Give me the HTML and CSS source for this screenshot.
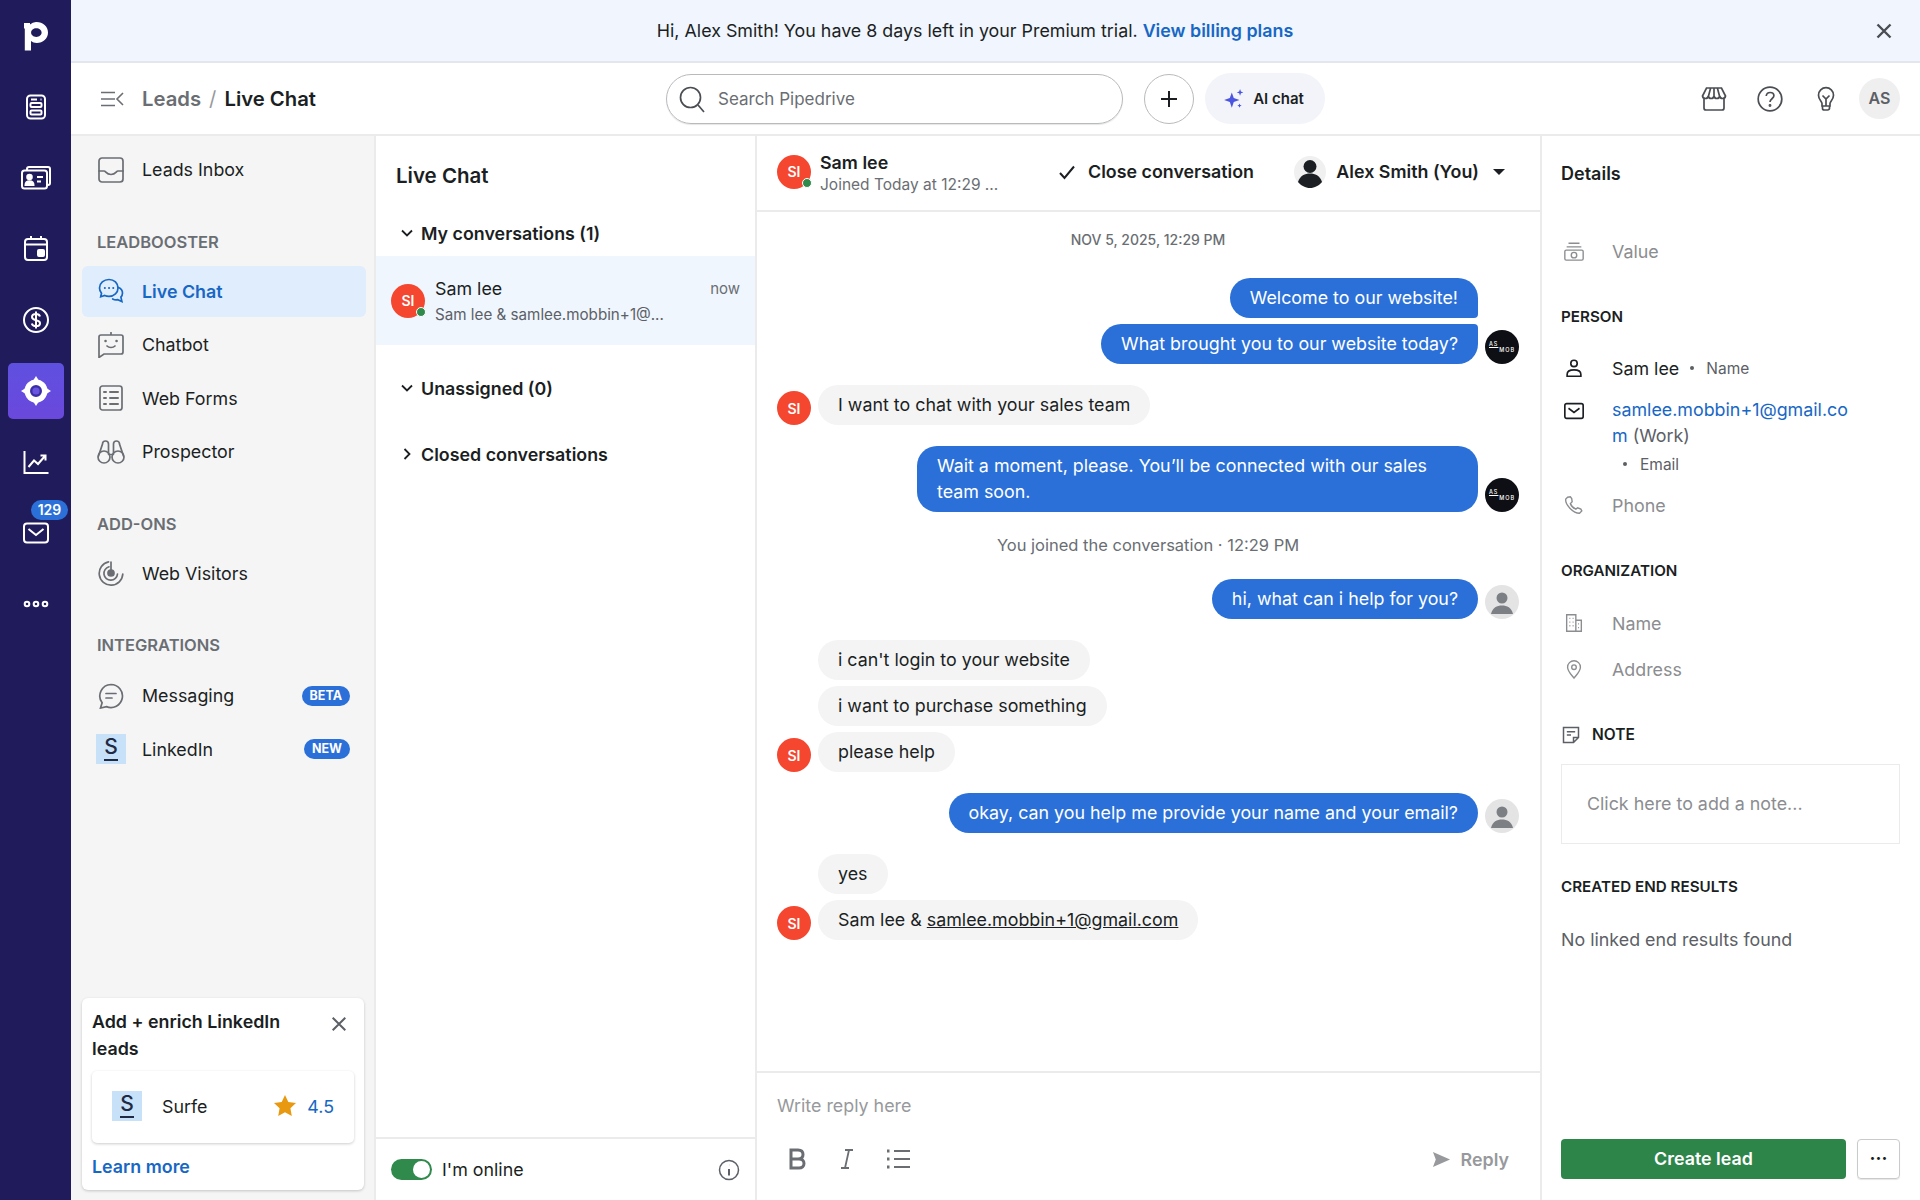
FILE: index.html
```html
<!DOCTYPE html>
<html lang="en">
<head>
    <meta charset="UTF-8">
    <meta name="viewport" content="width=device-width, initial-scale=1.0">
    <title>Live Chat</title>
    <link rel="stylesheet" href="styles.css">
</head>
<body>
    <nav class="rail">
        <div class="rail-item">
            <svg class="logo" viewBox="0 0 26 30"><path d="M1 2h6v1.500A8.600 8.600 0 0 1 13.500 1C19.900 1 25 5.600 25 11.500S19.900 22 13.800 22c-2.400 0-4.300-.7-5.800-1.900V29.500H1.800V7.500H1Zm12.300 5.200c-3 0-5.200 1.900-5.200 4.300s2.200 4.400 5.200 4.400 5.300-2 5.300-4.400-2.300-4.300-5.300-4.300Z" fill="#fff"/></svg>
        </div>
        <div class="rail-item">
            <svg class="rail-icon" viewBox="0 0 28 28"><rect x="5" y="2.500" width="18" height="23" rx="3.500"/><rect x="8.500" y="10" width="11" height="4" rx="1"/><rect x="8.500" y="17.500" width="11" height="4" rx="1"/><path d="M9 6.500h6M18.500 6.500h1"/></svg>
        </div>
        <div class="rail-item">
            <svg class="rail-icon wide" viewBox="0 0 32 28"><path d="M7 6V5a2 2 0 0 1 2-2h19a2 2 0 0 1 2 2v14a2 2 0 0 1-2 2h-1"/><rect x="2" y="6.500" width="25" height="18" rx="2.500"/><circle cx="9.500" cy="13" r="2.300" fill="#fff"/><path d="M5.500 21c0-5 8-5 8 0Z" fill="#fff"/><path d="M17 13h6M17 17.500h4"/></svg>
        </div>
        <div class="rail-item">
            <svg class="rail-icon" viewBox="0 1 28 28"><rect x="3" y="5" width="22" height="21" rx="3"/><path d="M9 2v4M19 2v4M3 10.500h22"/><rect x="16" y="16" width="6" height="6" rx="1" fill="#fff"/></svg>
        </div>
        <div class="rail-item">
            <svg class="rail-icon" viewBox="0 0 28 28"><circle cx="14" cy="14" r="12"/><path d="M18 10.500c-.5-1.700-2-2.500-4-2.500-2.300 0-4 1.100-4 3 0 4.500 8 2 8 6.200 0 2-1.800 2.900-4 2.900s-3.700-.9-4.200-2.700M14 5.500v17"/></svg>
        </div>
        <div class="rail-item">
            <div class="rail-active">
                <svg class="target" viewBox="0 0 32 32"><circle cx="16" cy="16" r="11.500" fill="#fff"/><path d="M16 1l2.500 4h-5ZM16 31l-2.500-4h5ZM1 16l4-2.500v5ZM31 16l-4 2.500v-5Z" fill="#fff"/><circle cx="16" cy="16" r="4.800" fill="#6a55e0" stroke="#3b2fa6" stroke-width="2.400"/></svg>
            </div>
        </div>
        <div class="rail-item">
            <svg class="rail-icon" viewBox="0 0 28 28"><path d="M2.500 3v22h24M6.500 19l5.500-6.500 4 3.500 7-8M18.500 7.500h5v5"/></svg>
        </div>
        <div class="rail-item">
            <span class="rail-badge">129</span>
            <svg class="rail-icon" viewBox="0 0 28 28"><rect x="2" y="4.500" width="24" height="19" rx="3"/><path d="M6.500 10l7.500 6 7.500-6"/></svg>
        </div>
        <div class="rail-item">
            <svg class="rail-icon" viewBox="0 0 28 28"><circle cx="5" cy="14" r="2.300"/><circle cx="14" cy="14" r="2.300"/><circle cx="23" cy="14" r="2.300"/></svg>
        </div>
    </nav>

    <div class="main">
        <div class="banner">
            <p class="banner-text">Hi, Alex Smith! You have 8 days left in your Premium trial. <a class="banner-link">View billing plans</a></p>
            <svg class="banner-close line-icon" viewBox="0 0 20 20"><path d="M3.500 3.500l13 13M16.500 3.500l-13 13"/></svg>
        </div>

        <header class="topbar">
            <div class="crumbs">
                <svg class="menu-icon line-icon" viewBox="0 0 24 18"><path d="M1 2.500h14M1 9h14M1 15.500h14M23 3l-6 6 6 6"/></svg>
                <span class="crumb-muted">Leads</span>
                <span class="crumb-slash">/</span>
                <span class="crumb-current">Live Chat</span>
            </div>
            <div class="search">
                <svg class="search-icon line-icon" viewBox="0 0 28 28"><circle cx="12.500" cy="12.500" r="10"/><path d="M20 20l6 7"/></svg>
                <span>Search Pipedrive</span>
            </div>
            <div class="add-btn">
                <svg class="line-icon" viewBox="0 0 20 20"><path d="M10 2v16M2 10h16"/></svg>
            </div>
            <div class="ai-btn">
                <svg viewBox="0 0 20 20"><path d="M8 4l1.800 5.200L15 11l-5.200 1.800L8 18l-1.800-5.200L1 11l5.200-1.800ZM15.500 1l.8 2.200 2.200.8-2.200.8-.8 2.200-.8-2.200-2.200-.8 2.200-.8ZM15 14l.6 1.400 1.400.6-1.400.6-.6 1.400-.6-1.400L13 16l1.400-.6Z" fill="#4a55e0"/></svg>
                <span>AI chat</span>
            </div>
            <div class="top-icons">
                <svg class="line-icon" viewBox="0 0 26 26"><path d="M3 12v10a2 2 0 0 0 2 2h16a2 2 0 0 0 2-2V12M5.500 2h15l4 8a3 3 0 0 1-3 2.500c-1.500 0-2.500-1-2.800-2.500-.3 1.500-1.300 2.500-2.800 2.500S13.300 11.500 13 10c-.3 1.500-1.400 2.500-2.900 2.500S7.600 11.500 7.300 10C7 11.500 6 12.500 4.500 12.500a3 3 0 0 1-3-2.500ZM9.500 2.500l-2 7.500M16.500 2.500l2 7.500M13 2.500V10"/></svg>
                <svg class="line-icon" viewBox="0 0 26 26"><circle cx="13" cy="13" r="11.800"/><path d="M9.200 10c.3-2.300 1.900-3.500 3.900-3.500 2.200 0 3.800 1.400 3.800 3.300 0 3-3.900 3-3.900 6.200"/><circle cx="13" cy="19.500" r=".6"/></svg>
                <svg class="line-icon" viewBox="0 0 26 26"><path d="M9 20v-2.500c0-2-3.500-3.800-3.500-8.300a7.500 7.500 0 0 1 15 0c0 4.500-3.500 6.300-3.500 8.300V20ZM9.500 20v2.200a1.800 1.800 0 0 0 1.800 1.800h3.400a1.800 1.800 0 0 0 1.800-1.800V20M13 20v-7M9.500 9.500l3.500 3.500 3.500-3.500"/></svg>
                <div class="user-chip">AS</div>
            </div>
        </header>

        <div class="content">
            <aside class="sidebar">
                <div class="nav-row first">
                    <svg class="nav-icon" viewBox="0 0 26 26"><rect x="1" y="1" width="24" height="24" rx="3"/><path d="M1 14h5c2 0 2 3.500 7 3.500S18 14 20 14h5"/></svg>
                    <span>Leads Inbox</span>
                </div>
                <h4 class="nav-heading">LEADBOOSTER</h4>
                <div class="nav-row active">
                    <svg class="nav-icon" viewBox="0 0 26 26"><path d="M11 1.500C5.800 1.500 1.500 5.200 1.500 10c0 2 .8 3.800 2 5.200l-.8 3.600 4-1.300c1.300.6 2.800.9 4.300.9 5.200 0 9-3.700 9-8.400S16.200 1.500 11 1.500Z"/><path d="M20.500 9.500c2.600 1.100 4 3.100 4 5.500 0 1.600-.6 3-1.600 4.100l1 4.400-4.200-1.800c-1.700.4-3.500.1-5-.8"/><path d="M6.800 10h.1M11 10h.1M15.200 10h.1" stroke-width="2"/></svg>
                    <span>Live Chat</span>
                </div>
                <div class="nav-row">
                    <svg class="nav-icon" viewBox="0 0 26 26"><path d="M13 3V.5M3 3h20a2 2 0 0 1 2 2v15a2 2 0 0 1-2 2H6l-5 3.500V5a2 2 0 0 1 2-2Z"/><path d="M7.500 9h.1M18.500 9h.1" stroke-width="2.500"/><path d="M9 14c2 2 6 2 8 0"/></svg>
                    <span>Chatbot</span>
                </div>
                <div class="nav-row">
                    <svg class="nav-icon" viewBox="0 0 26 26"><rect x="2" y="1" width="22" height="24" rx="2.500"/><path d="M6 7h2M12 7h8M6 13h2M12 13h8M6 19h2M12 19h8" stroke-width="2"/></svg>
                    <span>Web Forms</span>
                </div>
                <div class="nav-row">
                    <svg class="nav-icon binoculars" viewBox="0 0 28 26"><circle cx="7" cy="18" r="6"/><circle cx="21" cy="18" r="6"/><path d="M12 15.500h4M1.500 17L5.500 5a3 3 0 0 1 6 0v10M26.500 17L22.500 5a3 3 0 0 0-6 0v10"/></svg>
                    <span>Prospector</span>
                </div>
                <h4 class="nav-heading">ADD-ONS</h4>
                <div class="nav-row">
                    <svg class="nav-icon" viewBox="0 0 26 26"><path d="M10.500 1.800A11.800 11.800 0 1 0 24.800 14"/><path d="M11 6.800a6.800 6.800 0 1 0 8.500 7.200"/><circle cx="13" cy="13" r="3" fill="#6a6e73"/><path d="M13 13L13 2"/></svg>
                    <span>Web Visitors</span>
                </div>
                <h4 class="nav-heading integrations">INTEGRATIONS</h4>
                <div class="nav-row">
                    <svg class="nav-icon" viewBox="0 0 26 26"><path d="M13 1.500a11.500 11.500 0 1 1-4.500 22.100L2.500 25l1.600-5.200A11.500 11.500 0 0 1 13 1.500Z"/><path d="M8 10.500h10M8 15h6"/></svg>
                    <span>Messaging</span>
                    <span class="nav-tag">BETA</span>
                </div>
                <div class="nav-row">
                    <div class="surfe-logo"><span>S</span></div>
                    <span>LinkedIn</span>
                    <span class="nav-tag">NEW</span>
                </div>

                <div class="promo">
                    <div class="promo-head">
                        <p>Add + enrich LinkedIn leads</p>
                        <svg class="promo-close line-icon" viewBox="0 0 20 20"><path d="M3 3l14 14M17 3L3 17"/></svg>
                    </div>
                    <div class="promo-card">
                        <div class="surfe-logo small"><span>S</span></div>
                        <span class="promo-name">Surfe</span>
                        <svg class="star" viewBox="0 0 24 24"><path d="M12 1l3.300 7 7.700 1-5.600 5.300 1.400 7.700-6.800-3.700L5.200 22l1.400-7.700L1 9l7.700-1Z" fill="#e8990f"/></svg>
                        <span class="promo-score">4.5</span>
                    </div>
                    <a class="promo-link">Learn more</a>
                </div>
            </aside>

            <section class="conv-list">
                <h2 class="list-title">Live Chat</h2>
                <div class="group-row first">
                    <svg class="chev line-icon" viewBox="0 0 14 14"><path d="M2 4.500l5 5 5-5"/></svg>
                    <span>My conversations (1)</span>
                </div>
                <div class="conv-row">
                    <div class="avatar red">SI<i class="online"></i></div>
                    <div class="conv-text">
                        <div class="conv-top"><span>Sam lee</span><span class="conv-time">now</span></div>
                        <div class="conv-sub">Sam lee &amp; samlee.mobbin+1@...</div>
                    </div>
                </div>
                <div class="group-row">
                    <svg class="chev line-icon" viewBox="0 0 14 14"><path d="M2 4.500l5 5 5-5"/></svg>
                    <span>Unassigned (0)</span>
                </div>
                <div class="group-row">
                    <svg class="chev line-icon" viewBox="0 0 14 14"><path d="M4.500 2l5 5-5 5"/></svg>
                    <span>Closed conversations</span>
                </div>
                <div class="list-foot">
                    <div class="toggle"></div>
                    <span>I'm online</span>
                    <svg class="info-icon line-icon" viewBox="0 0 22 22"><circle cx="11" cy="11" r="9.500"/><path d="M11 10v6.500M11 6h.1" stroke-width="2"/></svg>
                </div>
            </section>

            <section class="chat">
                <div class="chat-head">
                    <div class="avatar red">SI<i class="online"></i></div>
                    <div class="chat-who">
                        <strong>Sam lee</strong>
                        <span>Joined Today at 12:29 ...</span>
                    </div>
                    <div class="close-conv">
                        <svg class="line-icon" viewBox="0 0 18 18"><path d="M2 10l4.500 5L16 3.500"/></svg>
                        <span>Close conversation</span>
                    </div>
                    <div class="owner">
                        <svg class="owner-pic" viewBox="0 0 32 32"><circle cx="16" cy="16" r="16" fill="#f0f0f1"/><circle cx="16" cy="10.500" r="6.500" fill="#1b1f23"/><path d="M4 26c2-6.500 7-8.500 12-8.500s10 2 12 8.500c-3 3.500-7.500 6-12 6s-9-2.500-12-6Z" fill="#1b1f23"/></svg>
                        <span>Alex Smith (You)</span>
                        <i class="caret"></i>
                    </div>
                </div>

                <div class="chat-body">
                    <p class="chat-date">NOV 5, 2025, 12:29 PM</p>

                    <div class="msg-group out">
                        <div class="bubbles">
                            <div class="bubble first-of">Welcome to our website!</div>
                            <div class="bubble last-of">What brought you to our website today?</div>
                        </div>
                        <div class="avatar brand"><span class="brand-as">AS</span><span class="brand-mob">MOB</span></div>
                    </div>

                    <div class="msg-group in">
                        <div class="avatar red">SI</div>
                        <div class="bubbles">
                            <div class="bubble">I want to chat with your sales team</div>
                        </div>
                    </div>

                    <div class="msg-group out">
                        <div class="bubbles">
                            <div class="bubble wide">Wait a moment, please. You’ll be connected with our sales team soon.</div>
                        </div>
                        <div class="avatar brand"><span class="brand-as">AS</span><span class="brand-mob">MOB</span></div>
                    </div>

                    <p class="chat-note">You joined the conversation · 12:29 PM</p>

                    <div class="msg-group out">
                        <div class="bubbles">
                            <div class="bubble">hi, what can i help for you?</div>
                        </div>
                        <div class="avatar agent">
                            <svg viewBox="0 0 34 34"><circle cx="17" cy="13" r="5.500" fill="#7c7f83"/><path d="M6 29c1.500-6.500 6-8.500 11-8.500s9.500 2 11 8.500Z" fill="#7c7f83"/></svg>
                        </div>
                    </div>

                    <div class="msg-group in">
                        <div class="avatar red">SI</div>
                        <div class="bubbles">
                            <div class="bubble">i can't login to your website</div>
                            <div class="bubble">i want to purchase something</div>
                            <div class="bubble">please help</div>
                        </div>
                    </div>

                    <div class="msg-group out">
                        <div class="bubbles">
                            <div class="bubble">okay, can you help me provide your name and your email?</div>
                        </div>
                        <div class="avatar agent">
                            <svg viewBox="0 0 34 34"><circle cx="17" cy="13" r="5.500" fill="#7c7f83"/><path d="M6 29c1.500-6.500 6-8.500 11-8.500s9.500 2 11 8.500Z" fill="#7c7f83"/></svg>
                        </div>
                    </div>

                    <div class="msg-group in">
                        <div class="avatar red">SI</div>
                        <div class="bubbles">
                            <div class="bubble">yes</div>
                            <div class="bubble">Sam lee &amp; <u>samlee.mobbin+1@gmail.com</u></div>
                        </div>
                    </div>
                </div>

                <div class="composer">
                    <p class="composer-hint">Write reply here</p>
                    <div class="composer-tools">
                        <svg class="tool" viewBox="0 0 20 24"><path d="M4 3h7c3 0 5 1.700 5 4.500S14 12 11 12H4ZM4 12h8c3 0 5 1.800 5 4.500S15 21 12 21H4Z" fill="none" stroke="#6a6e73" stroke-width="3"/></svg>
                        <svg class="tool" viewBox="0 0 20 24"><path d="M8 3h8M4 21h8M12 3L8 21" fill="none" stroke="#6a6e73" stroke-width="1.800"/></svg>
                        <svg class="tool list" viewBox="0 0 26 24"><path d="M9 4h16M9 12h16M9 20h16" fill="none" stroke="#6a6e73" stroke-width="2"/><path d="M2 4h2.500M2 12h2.500M2 20h2.500" fill="none" stroke="#6a6e73" stroke-width="3"/></svg>
                        <div class="reply-btn">
                            <svg viewBox="0 0 20 20"><path d="M1 2l18 8-18 8 3-8Z" fill="#97999c"/></svg>
                            <span>Reply</span>
                        </div>
                    </div>
                </div>
            </section>

            <aside class="details">
                <h3 class="details-title">Details</h3>
                <div class="field value-field">
                    <svg class="field-icon muted" viewBox="0 0 24 24"><path d="M6 3.500h12M4 7.500h16"/><rect x="2" y="11" width="20" height="11" rx="1.500"/><circle cx="12" cy="16.500" r="3"/></svg>
                    <span class="placeholder">Value</span>
                </div>
                <h4 class="details-heading person">PERSON</h4>
                <div class="field name-field">
                    <svg class="field-icon" viewBox="0 0 24 24"><circle cx="12" cy="7" r="3.500"/><path d="M4.500 21v-2c0-3.500 3.300-5 7.500-5s7.500 1.500 7.500 5v2Z"/></svg>
                    <span>Sam lee</span>
                    <i class="dot"></i>
                    <span class="field-kind">Name</span>
                </div>
                <div class="field email-field">
                    <svg class="field-icon" viewBox="0 0 24 24"><rect x="2" y="4" width="20" height="16" rx="2"/><path d="M6 9l6 4.500L18 9"/></svg>
                    <div class="email-text">
                        <p><a class="email-link">samlee.mobbin+1@gmail.co</a></p>
                        <p><a class="email-link">m</a> <span class="email-work">(Work)</span></p>
                        <div class="email-kind"><i class="dot"></i><span class="field-kind">Email</span></div>
                    </div>
                </div>
                <div class="field phone-field">
                    <svg class="field-icon muted" viewBox="0 0 24 24"><path d="M5 3.500L3 5.500c-1 6 8 15.500 15 15.500l2.500-2.500-1-2-3.500-1.500-2 1.500c-2.500-1-5-3.500-6-6l2-2L9.500 5 8 3Z"/></svg>
                    <span class="placeholder">Phone</span>
                </div>
                <h4 class="details-heading org">ORGANIZATION</h4>
                <div class="field org-name">
                    <svg class="field-icon muted" viewBox="0 0 24 24"><path d="M4 3h10v18H4ZM14 9h6v12h-6ZM7 7h1M10.500 7h1M7 11h1M10.500 11h1M7 15h1M10.500 15h1M16.500 13h1M16.500 17h1" /></svg>
                    <span class="placeholder">Name</span>
                </div>
                <div class="field org-address">
                    <svg class="field-icon muted" viewBox="0 0 24 24"><path d="M12 22c-4-5-7-8-7-12a7 7 0 0 1 14 0c0 4-3 7-7 12Z"/><circle cx="12" cy="10" r="2.500"/></svg>
                    <span class="placeholder">Address</span>
                </div>
                <div class="note-head">
                    <svg class="field-icon" viewBox="0 0 24 24"><path d="M3 3h18v12l-6 6H3ZM21 15h-6v6M7 8h10M7 12h5"/></svg>
                    <h4 class="details-heading">NOTE</h4>
                </div>
                <div class="note-box">Click here to add a note...</div>
                <h4 class="details-heading results">CREATED END RESULTS</h4>
                <p class="no-results">No linked end results found</p>
                <div class="details-foot">
                    <div class="create-btn">Create lead</div>
                    <div class="more-btn">···</div>
                </div>
            </aside>
        </div>
    </div>
</body>
</html>
```

FILE: styles.css
```css
* {
    box-sizing: border-box;
}
html, body {
    height: 100%;
}
body {
    margin: 0;
    display: flex;
    font-family: Inter, "Liberation Sans", sans-serif;
    font-size: 17.850px;
    color: #1b1f23;
    background-color: #fff;
    overflow: hidden;
}
p, h2, h3, h4 {
    margin: 0;
}
.line-icon {
    fill: none;
    stroke: currentColor;
    stroke-width: 2;
}

/* left rail */
.rail {
    width: 71px;
    flex: none;
    background-color: #201b5b;
    display: flex;
    flex-direction: column;
}
.rail-item {
    height: 71px;
    display: flex;
    align-items: center;
    justify-content: center;
    position: relative;
}
.logo {
    width: 26px;
    height: 30px;
}
.rail-icon {
    width: 28px;
    height: 28px;
    fill: none;
    stroke: #fff;
    stroke-width: 2;
}
.rail-icon.wide {
    width: 32px;
}
.rail-active {
    width: 56px;
    height: 56px;
    border-radius: 5px;
    background-image: linear-gradient(#5f50e0, #6a48dc);
    display: flex;
    align-items: center;
    justify-content: center;
}
.target {
    width: 32px;
    height: 32px;
}
.rail-badge {
    position: absolute;
    top: 3px;
    left: 31px;
    height: 20px;
    width: 37px;
    border-radius: 10px;
    background-color: #2a70d8;
    color: #fff;
    font-size: 14px;
    font-weight: 600;
    line-height: 20px;
    text-align: center;
}

.main {
    flex: 1;
    min-width: 0;
    display: flex;
    flex-direction: column;
}

/* trial banner */
.banner {
    height: 63px;
    flex: none;
    display: flex;
    align-items: center;
    background-color: #f0f5fe;
    border-bottom: 2px solid #e3e6ec;
}
.banner-text {
    flex: 1;
    padding-left: 5px;
    text-align: center;
}
.banner-link {
    color: #1767c5;
    font-weight: 600;
}
.banner-close {
    width: 20px;
    height: 20px;
    margin: 0 26px 0 0;
    color: #4a4e53;
    stroke-width: 2.400;
}

/* top bar */
.topbar {
    height: 73px;
    flex: none;
    display: flex;
    align-items: center;
    border-bottom: 2px solid #ebebec;
    position: relative;
}
.crumbs {
    width: 595px;
    flex: none;
    display: flex;
    align-items: center;
    padding-left: 29px;
    font-size: 20.300px;
    font-weight: 600;
}
.menu-icon {
    width: 24px;
    height: 18px;
    color: #6a6e73;
    margin-right: 18px;
    stroke-width: 1.600;
}
.crumb-muted {
    color: #6a6e73;
}
.crumb-slash {
    color: #97999c;
    font-weight: 400;
    margin: 0 8px;
}
.search {
    width: 457px;
    height: 50px;
    flex: none;
    border: 1px solid #b9babc;
    border-radius: 25px;
    display: flex;
    align-items: center;
    padding-left: 11px;
    color: #6a6e73;
    font-size: 17px;
    box-shadow: 0 1px 1px rgba(0, 0, 0, 0.1);
}
.search-icon {
    width: 28px;
    height: 28px;
    margin-right: 12px;
    color: #4a4e53;
    stroke-width: 1.700;
}
.add-btn {
    width: 50px;
    height: 50px;
    flex: none;
    margin-left: 21px;
    border: 1px solid #b9babc;
    border-radius: 50%;
    display: flex;
    align-items: center;
    justify-content: center;
}
.add-btn svg {
    width: 20px;
    height: 20px;
}
.ai-btn {
    width: 120px;
    height: 51px;
    flex: none;
    margin-left: 11px;
    padding-right: 3px;
    border-radius: 26px;
    background-color: #f3f4fa;
    display: flex;
    align-items: center;
    justify-content: center;
    gap: 8px;
    font-size: 15px;
    font-weight: 600;
}
.ai-btn svg {
    width: 22px;
    height: 22px;
}
.top-icons {
    margin-left: auto;
    margin-right: 20px;
    display: flex;
    align-items: center;
    color: #4a4e53;
}
.top-icons svg {
    width: 26px;
    height: 26px;
    margin-right: 30px;
    stroke-width: 1.700;
}
.top-icons svg:nth-child(3) {
    margin-right: 20px;
}
.user-chip {
    width: 41px;
    height: 41px;
    border-radius: 50%;
    background-color: #efefef;
    color: #5c6066;
    font-size: 16px;
    font-weight: 600;
    line-height: 41px;
    text-align: center;
}

.content {
    flex: 1;
    min-height: 0;
    display: flex;
}

/* sidebar */
.sidebar {
    width: 305px;
    flex: none;
    background-color: #f5f5f6;
    border-right: 2px solid #ebebec;
    display: flex;
    flex-direction: column;
    padding: 8px 8px 10px 11px;
}
.nav-row {
    height: 51px;
    margin-bottom: 2.500px;
    display: flex;
    align-items: center;
    padding-left: 16px;
    padding-right: 16px;
    border-radius: 6px;
    flex: none;
}
.nav-row.active {
    background-color: #e0edfc;
    color: #1767c5;
    font-weight: 600;
}
.nav-icon {
    width: 26px;
    height: 26px;
    flex: none;
    margin-right: 18px;
    fill: none;
    stroke: #6a6e73;
    stroke-width: 1.700;
    stroke-linecap: round;
}
.nav-icon.binoculars {
    width: 28px;
    margin-left: -1px;
    margin-right: 17px;
}
.nav-row.active .nav-icon {
    stroke: #1767c5;
}
.nav-heading {
    margin: 22px 0 13px 15px;
    font-size: 16.500px;
    line-height: 22px;
    font-weight: 600;
    color: #6a6e73;
}
.nav-row + .nav-heading {
    margin-top: 33px;
}
.nav-heading.integrations {
    margin-bottom: 14px;
}
.nav-tag {
    margin-left: auto;
    height: 20px;
    padding: 0 8px;
    border-radius: 10px;
    background-color: #2a70d8;
    color: #fff;
    font-size: 12.500px;
    font-weight: 700;
    line-height: 20px;
}
.surfe-logo {
    width: 30px;
    height: 30px;
    flex: none;
    margin: 0 16px 0 -2px;
    background-color: #c7e2f8;
    color: #1f2a44;
    font-size: 21px;
    font-weight: 500;
    text-align: center;
    line-height: 26px;
}
.surfe-logo span {
    border-bottom: 2px solid #1f2a44;
}
.surfe-logo.small {
    margin: 0 20px 0 0;
}

/* promo card */
.promo {
    margin-top: auto;
    margin-right: 2px;
    height: 192px;
    background-color: #fff;
    border-radius: 6px;
    box-shadow: 0 1px 3px rgba(0, 0, 0, 0.2);
    padding: 10px 10px 0 10px;
    font-weight: 600;
}
.promo-head {
    display: flex;
    align-items: flex-start;
    line-height: 27px;
}
.promo-head p {
    width: 200px;
}
.promo-close {
    width: 18px;
    height: 18px;
    margin: 7px 6px 0 auto;
    color: #5c6066;
    stroke-width: 2.200;
}
.promo-card {
    height: 72px;
    margin: 9px 0 13px;
    padding: 0 20px 2px;
    border-radius: 5px;
    box-shadow: 0 1px 3px rgba(0, 0, 0, 0.2);
    display: flex;
    align-items: center;
    font-weight: 400;
}
.star {
    width: 24px;
    height: 24px;
    margin: 0 10px 0 auto;
}
.promo-score {
    color: #1767c5;
}
.promo-link {
    color: #1767c5;
}

/* conversation list */
.conv-list {
    width: 381px;
    flex: none;
    border-right: 2px solid #ebebec;
    display: flex;
    flex-direction: column;
}
.list-title {
    margin: 26px 0 0 20px;
    font-size: 20.500px;
    line-height: 28px;
    font-weight: 600;
}
.group-row {
    height: 66px;
    flex: none;
    display: flex;
    align-items: center;
    padding-left: 24px;
    font-weight: 600;
}
.group-row.first {
    height: 42px;
    margin-top: 22px;
    margin-bottom: 0;
}
.group-row.first + .conv-row {
    margin-top: 2px;
}
.chev {
    width: 14px;
    height: 14px;
    margin-right: 7px;
    stroke-width: 1.800;
}
.conv-row {
    height: 89px;
    margin-bottom: 10px;
    flex: none;
    display: flex;
    align-items: center;
    padding: 0 15px;
    background-color: #f0f6fe;
}
.conv-text {
    flex: 1;
    min-width: 0;
    margin-left: 10px;
    padding-top: 3px;
}
.conv-top {
    display: flex;
    justify-content: space-between;
    line-height: 26px;
}
.conv-time {
    color: #6a6e73;
    font-size: 15px;
}
.conv-sub {
    color: #5c6066;
    font-size: 15.200px;
    line-height: 26px;
}
.list-foot {
    margin-top: auto;
    height: 63px;
    flex: none;
    border-top: 2px solid #ebebec;
    display: flex;
    align-items: center;
    padding: 0 15px;
}
.toggle {
    width: 41px;
    height: 21px;
    margin-right: 10px;
    border-radius: 11px;
    background-color: #2f8a4c;
    position: relative;
}
.toggle::after {
    content: "";
    position: absolute;
    right: 2px;
    top: 2px;
    width: 17px;
    height: 17px;
    border-radius: 50%;
    background-color: #fff;
}
.info-icon {
    width: 22px;
    height: 22px;
    margin-left: auto;
    color: #5c6066;
    stroke-width: 1.500;
}

/* avatars */
.avatar {
    width: 34px;
    height: 34px;
    flex: none;
    border-radius: 50%;
    position: relative;
    display: flex;
    align-items: center;
    justify-content: center;
    color: #fff;
    font-size: 14px;
    font-weight: 600;
}
.avatar.red {
    background-color: #f5462f;
}
.avatar.brand {
    background-color: #0e0f14;
    flex-direction: column;
    align-items: stretch;
    padding: 0 4px;
    font-size: 5.500px;
    font-weight: 500;
    line-height: 6px;
    letter-spacing: 1px;
}
.brand-as {
    text-decoration: underline;
}
.brand-mob {
    text-align: right;
}
.avatar.agent {
    background-color: #e4e4e5;
    overflow: hidden;
}
.avatar.agent svg {
    width: 34px;
    height: 34px;
}
.online {
    position: absolute;
    right: -1px;
    bottom: 1px;
    width: 10px;
    height: 10px;
    border-radius: 50%;
    background-color: #2f8a4c;
    border: 1px solid #fff;
}

/* chat */
.chat {
    width: 783px;
    flex: none;
    display: flex;
    flex-direction: column;
    min-height: 0;
}
.chat-head {
    height: 76px;
    flex: none;
    border-bottom: 2px solid #ebebec;
    display: flex;
    align-items: center;
    padding: 0 20px 3px;
}
.chat-who {
    width: 238px;
    margin-left: 9px;
    padding-top: 5px;
    display: flex;
    flex-direction: column;
    line-height: 22px;
}
.chat-who strong {
    font-weight: 600;
}
.chat-who span {
    color: #6a6e73;
    font-size: 15.500px;
}
.close-conv {
    display: flex;
    align-items: center;
    gap: 12px;
    font-weight: 600;
}
.close-conv svg {
    width: 18px;
    height: 18px;
}
.owner {
    margin-left: auto;
    margin-right: 15px;
    display: flex;
    align-items: center;
    font-weight: 600;
}
.owner-pic {
    width: 32px;
    height: 32px;
    margin-right: 10px;
}
.caret {
    margin-left: 14px;
    border-left: 6px solid transparent;
    border-right: 6px solid transparent;
    border-top: 6px solid #1b1f23;
}
.chat-body {
    flex: 1;
    min-height: 0;
    padding: 18px 21px 0 20px;
    display: flex;
    flex-direction: column;
}
.chat-date {
    text-align: center;
    font-size: 14px;
    font-weight: 500;
    color: #6a6e73;
    line-height: 20px;
    margin-bottom: 28px;
}
.chat-note {
    text-align: center;
    font-size: 16.500px;
    color: #6a6e73;
    line-height: 22px;
    margin: 1px 0 23px;
}
.msg-group {
    display: flex;
    align-items: flex-end;
    gap: 7px;
    margin-bottom: 21px;
}
.msg-group.out {
    justify-content: flex-end;
}
.bubbles {
    display: flex;
    flex-direction: column;
    gap: 6px;
}
.out .bubbles {
    align-items: flex-end;
}
.in .bubbles {
    align-items: flex-start;
}
.bubble {
    padding: 7px 20px;
    line-height: 26px;
    border-radius: 20px;
}
.out .bubble {
    background-color: #2a70d8;
    color: #fff;
}
.in .bubble {
    background-color: #f4f4f5;
}
.bubble.first-of {
    border-bottom-right-radius: 4px;
}
.bubble.last-of {
    border-top-right-radius: 4px;
}
.bubble.wide {
    width: 561px;
}
.composer {
    height: 129px;
    flex: none;
    border-top: 2px solid #ebebec;
    padding: 0 20px;
}
.composer-hint {
    margin-top: 21px;
    color: #97999c;
    line-height: 24px;
}
.composer-tools {
    margin-top: 29px;
    padding-left: 10px;
    display: flex;
    align-items: center;
    color: #97999c;
}
.tool {
    width: 20px;
    height: 24px;
    margin-right: 30px;
}
.tool:nth-child(2) {
    margin-right: 28px;
}
.tool.list {
    width: 26px;
}
.reply-btn {
    margin-left: auto;
    margin-right: 11px;
    display: flex;
    align-items: center;
    gap: 10px;
    font-weight: 600;
}
.reply-btn svg {
    width: 19px;
    height: 19px;
}

/* details */
.details {
    flex: 1;
    min-width: 0;
    border-left: 2px solid #ebebec;
    padding: 26px 20px 21px 19px;
    display: flex;
    flex-direction: column;
}
.details-title {
    font-size: 18px;
    line-height: 24px;
    font-weight: 600;
}
.field {
    display: flex;
    align-items: center;
}
.field-icon {
    width: 22px;
    height: 22px;
    flex: none;
    margin-left: 2px;
    margin-right: 27px;
    fill: none;
    stroke: #1b1f23;
    stroke-width: 1.800;
}
.field-icon.muted {
    stroke: #8b8d90;
    stroke-width: 1.500;
}
.placeholder {
    color: #8b8d90;
}
.value-field {
    margin-top: 53px;
    height: 24px;
}
.details-heading {
    font-size: 15.200px;
    line-height: 20px;
    font-weight: 600;
}
.details-heading.person {
    margin-top: 44px;
}
.name-field {
    margin-top: 28px;
    height: 26px;
}
.dot {
    width: 4px;
    height: 4px;
    margin: 0 12px 0 11px;
    border-radius: 50%;
    background-color: #5c6066;
    flex: none;
}
.field-kind {
    color: #5c6066;
    font-size: 15.500px;
}
.email-field {
    margin-top: 16px;
    align-items: flex-start;
}
.email-field .field-icon {
    margin-top: 3px;
}
.email-text p {
    line-height: 26px;
}
.email-link {
    color: #1767c5;
}
.email-work {
    color: #5c6066;
}
.email-kind {
    display: flex;
    align-items: center;
    height: 28px;
    margin-top: 1px;
}
.email-kind .dot {
    margin: 0 13px 0 11px;
}
.phone-field {
    margin-top: 14px;
    height: 26px;
}
.details-heading.org {
    margin-top: 43px;
}
.org-name {
    margin-top: 29px;
    height: 26px;
}
.org-address {
    margin-top: 20px;
    height: 26px;
}
.note-head {
    margin-top: 41px;
    display: flex;
    align-items: center;
    height: 24px;
}
.note-head .field-icon {
    width: 20px;
    height: 20px;
    margin-left: 0;
    margin-right: 11px;
    stroke: #5c6066;
}
.note-head .details-heading {
    font-size: 15.500px;
}
.note-box {
    height: 80px;
    margin-top: 17px;
    padding: 0 25px;
    border: 1px solid #ebebec;
    color: #8b8d90;
    line-height: 78px;
}
.details-heading.results {
    margin-top: 33px;
}
.no-results {
    margin-top: 30px;
    color: #5c6066;
    line-height: 26px;
}
.details-foot {
    margin-top: auto;
    display: flex;
    gap: 11px;
}
.create-btn {
    width: 285px;
    height: 40px;
    border-radius: 4px;
    background-color: #2e854a;
    color: #fff;
    font-weight: 600;
    line-height: 40px;
    text-align: center;
}
.more-btn {
    width: 43px;
    height: 40px;
    border: 1px solid #c9cacc;
    border-radius: 4px;
    box-shadow: 0 1px 1px rgba(0, 0, 0, 0.1);
    font-weight: 700;
    line-height: 38px;
    text-align: center;
}
```
